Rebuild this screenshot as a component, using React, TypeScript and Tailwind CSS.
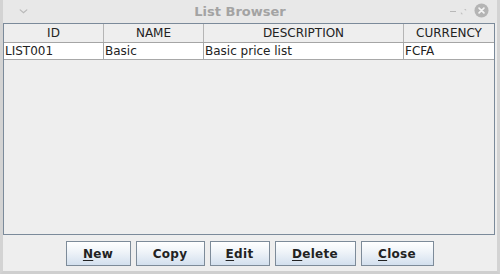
import type { SVGProps } from "react";

const ChevronIcon = (props: SVGProps<SVGSVGElement>) => (
  <svg viewBox="0 0 10 6" fill="none" aria-hidden="true" {...props}>
    <path d="M1 1l4 3.5L9 1" stroke="currentColor" strokeWidth="1.4" strokeLinecap="round" />
  </svg>
);

const RestoreIcon = (props: SVGProps<SVGSVGElement>) => (
  <svg viewBox="0 0 8 8" fill="none" aria-hidden="true" {...props}>
    <path d="M7 1L4.5 1 7 3.5Z" fill="currentColor" />
    <path d="M1 7L3.5 7 1 4.5Z" fill="currentColor" />
  </svg>
);

const CloseIcon = (props: SVGProps<SVGSVGElement>) => (
  <svg viewBox="0 0 16 16" aria-hidden="true" {...props}>
    <circle cx="8" cy="8" r="7.5" fill="#b4b4b4" />
    <path d="M5.4 5.4l5.2 5.2M10.6 5.4l-5.2 5.2" stroke="#f4f4f4" strokeWidth="1.8" strokeLinecap="round" />
  </svg>
);

const columns = [
  { key: "id", label: "ID", width: "w-[100px]" },
  { key: "name", label: "NAME", width: "w-[100px]" },
  { key: "description", label: "DESCRIPTION", width: "w-[200px]" },
  { key: "currency", label: "CURRENCY", width: "flex-1" },
] as const;

const rows = [
  { id: "LIST001", name: "Basic", description: "Basic price list", currency: "FCFA" },
];

const buttons = [
  { mnemonic: "N", rest: "ew", width: "w-[65px]" },
  { mnemonic: "", rest: "Copy", width: "w-[69px]" },
  { mnemonic: "E", rest: "dit", width: "w-[60px]" },
  { mnemonic: "D", rest: "elete", width: "w-[81px]" },
  { mnemonic: "C", rest: "lose", width: "w-[73px]" },
];

export default function App() {
  return (
    <div className="flex h-[274px] w-[500px] flex-col border-x-[3px] border-b-[3px] border-x-[#d3d3d3] border-b-[#cfcfcf] bg-[#eeeeee] font-['DejaVu_Sans',sans-serif] text-[#222222]">
      <div className="relative flex h-[23px] shrink-0 items-center justify-center bg-[#e8e8e8]">
        <ChevronIcon className="absolute left-[16px] top-[9px] h-[5px] w-[9px] text-[#b8b8b8]" />
        <span className="ml-[-20px] text-[13px] font-bold text-[#a3a3a3]">List Browser</span>
        <span className="absolute left-[447px] top-[11px] h-[1px] w-[6px] bg-[#b8b8b8]" />
        <RestoreIcon className="absolute left-[457px] top-[8px] h-[7px] w-[7px] text-[#c2c2c2]" />
        <CloseIcon className="absolute left-[471px] top-[3px] h-[15px] w-[15px]" />
      </div>

      <div className="mr-[2px] flex h-[212px] flex-col border border-[#7b8a9a] bg-[#eeeeee]">
        <div className="flex h-[19px] border-b border-[#a5a5a5] bg-[#eeeeee] text-[12px]">
          {columns.map((col) => (
            <div
              key={col.key}
              className={`${col.width} flex items-center justify-center border-r border-[#b5b5b5] last:border-r-0`}
            >
              {col.label}
            </div>
          ))}
        </div>
        {rows.map((row) => (
          <div key={row.id} className="flex h-[17px] border-b border-[#a8a8a8] bg-white text-[12px]">
            {columns.map((col) => (
              <div
                key={col.key}
                className={`${col.width} flex items-center overflow-hidden whitespace-nowrap border-r border-[#a8a8a8] pl-[1px] last:border-r-0`}
              >
                {row[col.key]}
              </div>
            ))}
          </div>
        ))}
      </div>

      <div className="mt-[6px] flex justify-center gap-[5px] pr-[1px]">
        {buttons.map((btn) => (
          <button
            key={btn.rest}
            type="button"
            className={`${btn.width} h-[25px] border border-[#7d8b99] bg-[linear-gradient(to_bottom,#ffffff_0%,#eef3f8_45%,#d3e0ee_100%)] text-[12px] font-bold tracking-[0.3px] text-[#222222]`}
          >
            {btn.mnemonic && <span className="underline underline-offset-[2px]">{btn.mnemonic}</span>}
            {btn.rest}
          </button>
        ))}
      </div>
    </div>
  );
}
